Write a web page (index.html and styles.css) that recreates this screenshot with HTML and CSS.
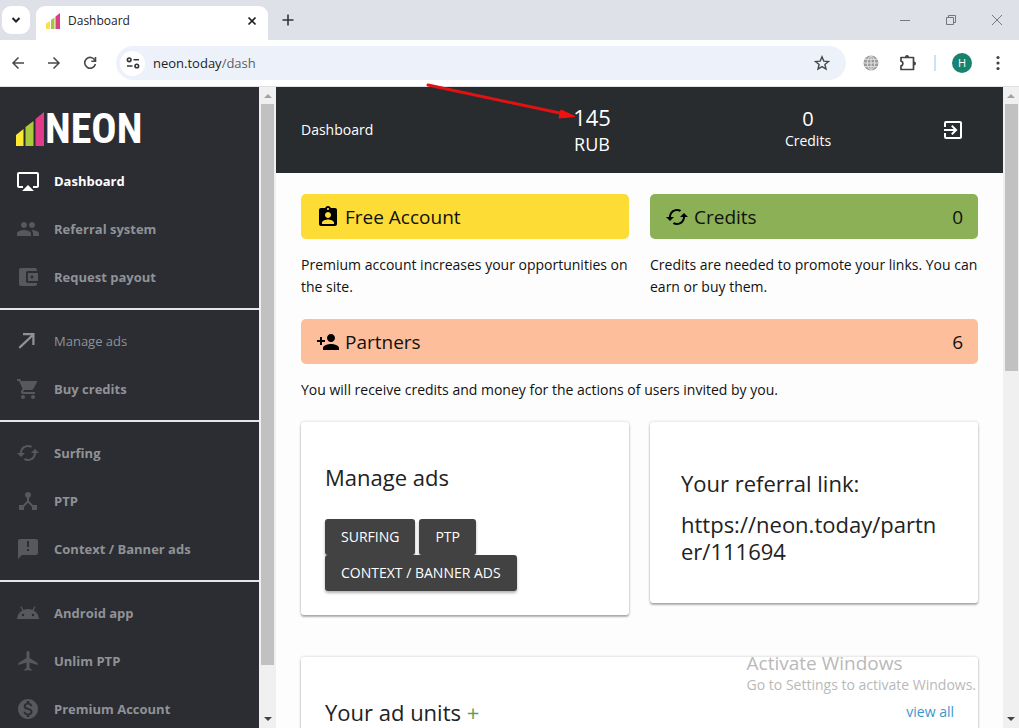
FILE: index.html
```html
<!DOCTYPE html>
<html lang="en">
<head>
<meta charset="utf-8">
<title>Dashboard</title>
<link rel="stylesheet" href="styles.css">
</head>
<body>
<div class="browser">
  <div class="tabstrip">
    <button class="tab-search" aria-label="Search tabs"><svg width="12" height="12" viewBox="0 0 12 12"><path d="M2.500 4 6 7.500 9.500 4" fill="none" stroke="#1f2023" stroke-width="2"/></svg></button>
    <div class="tab">
      <svg width="14" height="16" viewBox="0 0 14 16"><path d="M0 10.500 4 8v8H0z" fill="#fbe04a"/><path d="M5 7 8.500 4.500V16H5z" fill="#a5c63b"/><path d="M9.500 3.500 14 0v16H9.500z" fill="#dd3f87"/></svg>
      <span class="tab-title">Dashboard</span>
      <button class="icon-btn" aria-label="Close tab"><svg width="10" height="10" viewBox="0 0 10 10"><path d="m1.500 1.500 7 7m0-7-7 7" stroke="#1f2023" stroke-width="1.700"/></svg></button>
    </div>
    <button class="icon-btn new-tab" aria-label="New tab"><svg width="12" height="12" viewBox="0 0 12 12"><path d="M6 .500v11M.500 6h11" stroke="#333639" stroke-width="1.600"/></svg></button>
    <div class="window-controls">
      <button class="icon-btn" aria-label="Minimize"><svg width="12" height="12" viewBox="0 0 12 12"><path d="M1 6.500h10" stroke="#75787c"/></svg></button>
      <button class="icon-btn" aria-label="Restore"><svg width="12" height="12" viewBox="0 0 12 12"><path d="M1.500 3.500h7v7h-7zM3.500 3.500v-2h7v7h-2" fill="none" stroke="#75787c"/></svg></button>
      <button class="icon-btn" aria-label="Close window"><svg width="12" height="12" viewBox="0 0 12 12"><path d="m1 1 10 10m0-10L1 11" stroke="#75787c"/></svg></button>
    </div>
  </div>
  <div class="toolbar">
    <button class="icon-btn nav-btn" aria-label="Back"><svg width="14" height="14" viewBox="0 0 14 14"><path d="M13 7H2m5.500-5.500L2 7l5.500 5.500" fill="none" stroke="#45484c" stroke-width="1.500"/></svg></button>
    <button class="icon-btn nav-btn" aria-label="Forward"><svg width="14" height="14" viewBox="0 0 14 14"><path d="M1 7h11M6.500 1.500 12 7l-5.500 5.500" fill="none" stroke="#45484c" stroke-width="1.500"/></svg></button>
    <button class="icon-btn nav-btn" aria-label="Reload"><svg width="14" height="14" viewBox="0 0 14 14"><path d="M12 4.500A5.400 5.400 0 1 0 12.400 8M12.500 1v4.200H8.300" fill="none" stroke="#45484c" stroke-width="1.600"/></svg></button>
    <div class="omnibox">
      <button class="site-info" aria-label="Site information"><svg width="14" height="14" viewBox="0 0 14 14" fill="none" stroke="#333639" stroke-width="1.600"><circle cx="3.200" cy="3.800" r="1.800"/><path d="M7.500 3.800H13M1 10h5.500"/><circle cx="10.800" cy="10" r="1.800"/></svg></button>
      <span class="url">neon.today<span class="url-path">/dash</span></span>
      <button class="icon-btn" aria-label="Bookmark"><svg width="16" height="16" viewBox="0 0 16 16"><path d="m8 1.800 1.800 4.300 4.700.400-3.600 3 1.100 4.500L8 11.600 4 14l1.100-4.500-3.600-3 4.700-.400z" fill="none" stroke="#45484c" stroke-width="1.400"/></svg></button>
    </div>
    <div class="toolbar-end">
      <button class="icon-btn" aria-label="Globe"><svg width="16" height="16" viewBox="0 0 16 16"><circle cx="8" cy="8" r="7.500" fill="#9a9a9a"/><path d="M0 8h16M1 4.300h14M1 11.700h14M8 0v16M8 .5C3 4 3 12 8 15.500M8 .5c5 3.500 5 11.500 0 15" fill="none" stroke="#e4e4e4"/></svg></button>
      <button class="icon-btn" aria-label="Extensions"><svg width="18" height="18" viewBox="0 0 18 18"><path d="M2 3.500h12.500V15.500H2v-3.600a2.400 2.400 0 0 0 0-4.700z" fill="none" stroke="#404347" stroke-width="1.700" stroke-linejoin="round"/><path d="M6 3a2 2 0 0 1 4 0zM15 7.500a2 2 0 0 1 0 4z" fill="#404347"/></svg></button>
      <span class="divider"></span>
      <button class="avatar">H</button>
      <button class="icon-btn" aria-label="Menu"><svg width="4" height="16" viewBox="0 0 4 16" fill="#404347"><circle cx="2" cy="2.500" r="1.600"/><circle cx="2" cy="8" r="1.600"/><circle cx="2" cy="13.500" r="1.600"/></svg></button>
    </div>
  </div>

  <div class="page">
    <aside class="sidebar">
      <div class="logo">
        <svg width="28" height="36" viewBox="0 0 28 36"><path d="M0 25 7.500 19v17H0z" fill="#fde92f"/><path d="M9.500 17 17.500 11v25h-8z" fill="#a9cb3c"/><path d="M19.500 9 28 2v34h-8.500z" fill="#e23b8a"/></svg>
        <span>NEON</span>
      </div>
      <nav>
        <div class="nav-group">
          <a class="active" href="#"><svg viewBox="0 0 24 24"><path d="M6 22h12l-6-6zM21 3H3c-1.100 0-2 .900-2 2v12c0 1.100.900 2 2 2h4v-2H3V5h18v12h-4v2h4c1.100 0 2-.900 2-2V5c0-1.100-.900-2-2-2z"/></svg>Dashboard</a>
          <a href="#"><svg viewBox="0 0 24 24"><path d="M16 11c1.660 0 2.990-1.340 2.990-3S17.660 5 16 5s-3 1.340-3 3 1.340 3 3 3zm-8 0c1.660 0 2.990-1.340 2.990-3S9.660 5 8 5 5 6.340 5 8s1.340 3 3 3zm0 2c-2.330 0-7 1.170-7 3.500V19h14v-2.500c0-2.330-4.670-3.500-7-3.500zm8 0c-.290 0-.620.020-.970.050 1.160.840 1.970 1.970 1.970 3.450V19h6v-2.500c0-2.330-4.670-3.500-7-3.500z"/></svg>Referral system</a>
          <a href="#"><svg viewBox="0 0 24 24"><path d="M21 18v1c0 1.100-.900 2-2 2H5c-1.110 0-2-.900-2-2V5c0-1.100.890-2 2-2h14c1.100 0 2 .900 2 2v1h-9c-1.110 0-2 .900-2 2v8c0 1.100.890 2 2 2h9zm-9-2h10V8H12v8zm4-2.500c-.830 0-1.500-.670-1.500-1.500s.670-1.500 1.500-1.500 1.500.670 1.500 1.500-.670 1.500-1.500 1.500z"/></svg>Request payout</a>
        </div>
        <div class="nav-group">
          <a class="plain" href="#"><svg viewBox="0 0 24 24"><path d="M7 4v2.300h8L2.500 18 4 19.700 16.300 8v8h2.200V4z"/></svg>Manage ads</a>
          <a href="#"><svg viewBox="0 0 24 24"><path d="M7 18c-1.100 0-1.990.900-1.990 2S5.900 22 7 22s2-.900 2-2-.900-2-2-2zM1 2v2h2l3.600 7.590-1.350 2.450c-.160.280-.250.610-.250.960 0 1.100.900 2 2 2h12v-2H7.420c-.140 0-.250-.110-.250-.250l.030-.120.900-1.630h7.450c.750 0 1.410-.410 1.750-1.030l3.580-6.490A1 1 0 0 0 20 4H5.210l-.940-2H1zm16 16c-1.100 0-1.990.900-1.990 2s.890 2 1.990 2 2-.900 2-2-.900-2-2-2z"/></svg>Buy credits</a>
        </div>
        <div class="nav-group">
          <a href="#"><svg viewBox="0 0 24 24"><path d="m19 8-4 4h3c0 3.310-2.690 6-6 6-1.010 0-1.970-.250-2.800-.700l-1.460 1.460A7.930 7.930 0 0 0 12 20c4.420 0 8-3.580 8-8h3l-4-4zM6 12c0-3.310 2.690-6 6-6 1.010 0 1.970.250 2.800.700l1.460-1.460A7.930 7.930 0 0 0 12 4c-4.420 0-8 3.580-8 8H1l4 4 4-4H6z"/></svg>Surfing</a>
          <a href="#"><svg viewBox="0 0 24 24"><path d="m17 16-4-4V8.820C14.160 8.400 15 7.300 15 6c0-1.660-1.340-3-3-3S9 4.340 9 6c0 1.300.840 2.400 2 2.820V12l-4 4H3v5h5v-3.050l4-4.200 4 4.200V21h5v-5h-4z"/></svg>PTP</a>
          <a href="#"><svg viewBox="0 0 24 24"><path d="M20 2H4c-1.100 0-1.990.900-1.990 2L2 22l4-4h14c1.100 0 2-.900 2-2V4c0-1.100-.900-2-2-2zm-7 12h-2v-2h2v2zm0-4h-2V4h2v6z"/></svg>Context / Banner ads</a>
        </div>
        <div class="nav-group">
          <a href="#"><svg viewBox="0 0 24 24"><path d="m17.600 9.480 1.840-3.180c.160-.310.040-.690-.260-.850a.640.640 0 0 0-.830.220l-1.880 3.240a11.460 11.460 0 0 0-8.940 0L5.650 5.670a.640.640 0 0 0-.870-.200c-.280.180-.370.540-.220.830L6.400 9.480A10.780 10.780 0 0 0 1 18h22a10.780 10.780 0 0 0-5.400-8.520zM7 15.250a1.250 1.250 0 1 1 0-2.500 1.250 1.250 0 0 1 0 2.500zm10 0a1.250 1.250 0 1 1 0-2.500 1.250 1.250 0 0 1 0 2.500z"/></svg>Android app</a>
          <a href="#"><svg viewBox="0 0 24 24"><path d="M21.500 16v-2l-8-5V3.500c0-.830-.670-1.500-1.500-1.500s-1.500.670-1.500 1.500V9l-8 5v2l8-2.500V19l-2 1.500V22l3.500-1 3.500 1v-1.500l-2-1.500v-5.500l8 2.500z"/></svg>Unlim PTP</a>
          <a href="#"><svg viewBox="0 0 24 24"><path d="M12 2C6.480 2 2 6.480 2 12s4.480 10 10 10 10-4.480 10-10S17.520 2 12 2zm1.410 16.090V20h-2.670v-1.930c-1.710-.360-3.160-1.460-3.270-3.400h1.960c.100 1.050.820 1.870 2.650 1.870 1.960 0 2.400-.980 2.400-1.590 0-.830-.440-1.610-2.670-2.140-2.480-.600-4.180-1.620-4.180-3.670 0-1.720 1.390-2.840 3.110-3.210V4h2.670v1.950c1.860.450 2.790 1.860 2.850 3.390H14.300c-.050-1.110-.640-1.870-2.220-1.870-1.500 0-2.400.680-2.400 1.640 0 .840.650 1.390 2.670 1.910s4.180 1.390 4.180 3.910c-.010 1.830-1.380 2.830-3.120 3.160z"/></svg>Premium Account</a>
        </div>
      </nav>
    </aside>
    <div class="scrollbar side-scroll"><span class="up"></span><span class="thumb"></span><span class="down"></span></div>

    <main>
      <header class="topbar">
        <span class="crumb">Dashboard</span>
        <div class="money"><span>145</span><span>RUB</span></div>
        <div class="credits"><span class="num">0</span><span>Credits</span></div>
        <button class="icon-btn" aria-label="Log out"><svg width="24" height="24" viewBox="0 0 24 24" fill="#fff"><path d="M10.090 15.590 11.500 17l5-5-5-5-1.410 1.410L12.670 11H3v2h9.670l-2.580 2.590zM19 3H5a2 2 0 0 0-2 2v4h2V5h14v14H5v-4H3v4a2 2 0 0 0 2 2h14c1.100 0 2-.900 2-2V5c0-1.100-.900-2-2-2z"/></svg></button>
      </header>
      <div class="content">
        <section>
          <div class="banner yellow"><svg viewBox="0 0 24 24"><path d="M19 3h-4.180C14.400 1.840 13.300 1 12 1s-2.400.840-2.820 2H5c-1.100 0-2 .900-2 2v14c0 1.100.900 2 2 2h14c1.100 0 2-.900 2-2V5c0-1.100-.900-2-2-2zm-7 0c.550 0 1 .450 1 1s-.450 1-1 1-1-.450-1-1 .450-1 1-1zm0 4c1.660 0 3 1.340 3 3s-1.340 3-3 3-3-1.340-3-3 1.340-3 3-3zm6 12H6v-1.400c0-2 4-3.100 6-3.100s6 1.100 6 3.100V19z"/></svg><span>Free Account</span></div>
          <p>Premium account increases your opportunities on the site.</p>
        </section>
        <section>
          <div class="banner green"><svg viewBox="0 0 24 24"><path d="m19 8-4 4h3c0 3.310-2.690 6-6 6-1.010 0-1.970-.250-2.800-.700l-1.460 1.460A7.930 7.930 0 0 0 12 20c4.420 0 8-3.580 8-8h3l-4-4zM6 12c0-3.310 2.690-6 6-6 1.010 0 1.970.250 2.800.700l1.460-1.460A7.930 7.930 0 0 0 12 4c-4.420 0-8 3.580-8 8H1l4 4 4-4H6z"/></svg><span>Credits</span><span class="count">0</span></div>
          <p>Credits are needed to promote your links. You can earn or buy them.</p>
        </section>
        <section class="wide">
          <div class="banner peach"><svg viewBox="0 0 24 24"><path d="M15 12c2.210 0 4-1.790 4-4s-1.790-4-4-4-4 1.790-4 4 1.790 4 4 4zm-9-2V7H4v3H1v2h3v3h2v-3h3v-2H6zm9 4c-2.670 0-8 1.340-8 4v2h16v-2c0-2.660-5.330-4-8-4z"/></svg><span>Partners</span><span class="count">6</span></div>
          <p>You will receive credits and money for the actions of users invited by you.</p>
        </section>
        <section class="card manage">
          <h2>Manage ads</h2>
          <div class="buttons"><button>SURFING</button><button>PTP</button><button>CONTEXT / BANNER ADS</button></div>
        </section>
        <section class="card referral">
          <h2>Your referral link:</h2>
          <div class="ref-link">https://neon.today/partner/111694</div>
        </section>
        <section class="card wide units">
          <h2>Your ad units <a class="add" href="#">+</a></h2>
          <a class="view-all" href="#">view all</a>
        </section>
      </div>
    </main>
    <div class="scrollbar main-scroll"><span class="up"></span><span class="thumb"></span><span class="down"></span></div>
  </div>

  <svg class="pointer" width="152" height="42" viewBox="0 0 152 42"><path d="M2 2 136 30.500" stroke="#e01212" stroke-width="3" stroke-linecap="round"/><path d="m135 27 14 6.500-16 1.500z" fill="#f51010" stroke="#f51010"/></svg>
  <div class="watermark"><div class="wm-title">Activate Windows</div><div>Go to Settings to activate Windows.</div></div>
</div>
</body>
</html>
```
FILE: styles.css
```css
* { box-sizing: border-box; }
body {
  margin: 0;
  font: 14px/22px "Open Sans", "Noto Sans", sans-serif;
  color: #111;
  background: #fff;
}
svg { display: block; flex: none; }
button { font: inherit; border: 0; padding: 0; background: none; cursor: pointer; }
a { text-decoration: none; }
h2, p { margin: 0; font-weight: 400; }
.browser { position: relative; display: flex; flex-direction: column; height: 100vh; overflow: hidden; }
.icon-btn { display: grid; place-items: center; }

.tabstrip { display: flex; align-items: center; height: 40px; flex: none; background: #dee1e7; padding-left: 2px; }
.tab-search { display: grid; place-items: center; width: 28px; height: 28px; border-radius: 9px; background: #fff; }
.tab {
  display: flex; align-items: center; gap: 8px;
  align-self: flex-end; width: 232px; height: 34px;
  margin-left: 6px; padding: 0 11px 4px 10px;
  background: #fff; border-radius: 9px 9px 0 0;
}
.tab-title { flex: 1; font-size: 12px; color: #222; }
.new-tab { margin-left: 14px; }
.window-controls { display: flex; gap: 34px; margin-left: auto; padding-right: 16px; }

.toolbar { display: flex; align-items: center; height: 47px; flex: none; padding-left: 11px; border-bottom: 1px solid #dfe2e5; }
.nav-btn { width: 14px; margin-right: 22px; }
.omnibox {
  flex: 1; display: flex; align-items: center; gap: 8px;
  height: 34px; margin-left: -3px; padding: 0 16px 0 4px;
  background: #edf2fa; border-radius: 17px;
}
.site-info { display: grid; place-items: center; width: 25px; height: 25px; border-radius: 50%; background: #fff; }
.url { flex: 1; font-size: 13px; color: #222; }
.url-path { color: #5b5e62; }
.toolbar-end { display: flex; align-items: center; padding: 0 19px 0 17px; gap: 20px; }
.divider { width: 2px; height: 16px; background: #cfe0fa; margin: 0 -4px 0 -3px; }
.avatar { width: 20px; height: 20px; margin-right: 4px; border-radius: 50%; background: #17836f; color: #fff; font-size: 11px; line-height: 20px; }

.page { flex: 1; display: flex; min-height: 0; }
.sidebar { width: 259px; flex: none; overflow: hidden; background: #2b2d32; }
.logo {
  display: flex; align-items: flex-end; gap: 1px;
  height: 70px; padding: 0 16px 11px;
  color: #fff; font: 700 42px/34px "Roboto Condensed", "Liberation Sans Narrow", Roboto, sans-serif;
}
.nav-group + .nav-group { margin-top: 7px; padding-top: 7px; border-top: 2px solid #e6e6ea; }
.nav-group a { display: flex; align-items: center; gap: 14px; height: 48px; padding-left: 16px; color: #909296; font-size: 13px; font-weight: 700; }
.nav-group svg { width: 24px; height: 24px; fill: #56585d; }
.nav-group .active { color: #fff; }
.nav-group .active svg { fill: #fff; }
.nav-group .plain { font-weight: 400; }
.nav-group .plain svg { fill: #909296; }

.scrollbar { display: flex; flex-direction: column; align-items: center; flex: none; width: 17px; background: #f0f0f0; }
.up, .down { border: 4px solid transparent; width: 8px; flex: none; }
.up { border-top: 0; border-bottom-color: #a3a3a3; margin: 7px 0 6px; }
.down { border-bottom: 0; border-top-color: #444; margin: auto 0 7px; }
.thumb { width: 13px; background: #c1c1c1; }
.side-scroll .thumb { flex: 0 0 87.5%; }
.main-scroll { width: 16px; }
.main-scroll .thumb { flex: 0 0 41.6%; }

main { flex: 1; min-width: 0; overflow: hidden; background: #fdfdfd; }
.topbar {
  display: grid; grid-template-columns: 183fr 216fr 216fr 74fr; align-items: center;
  height: 86px; padding: 0 13px 0 25px;
  background: #292c2f; color: #fff;
}
.money, .credits { display: flex; flex-direction: column; align-items: center; }
.money { font-size: 22px; line-height: 28px; }
.money span + span { font-size: 18px; line-height: 26px; }
.credits .num { font-size: 20px; }

.content { display: grid; grid-template-columns: 1fr 1fr; column-gap: 21px; align-items: start; padding: 21px 25px; }
.wide { grid-column: 1 / -1; }
.banner { display: flex; align-items: center; gap: 5px; height: 45px; padding: 0 15px; border-radius: 5px; font-size: 19px; }
.banner svg { width: 24px; height: 24px; }
.count { margin-left: auto; }
.yellow { background: #fcdc35; }
.green { background: #8bb056; }
.peach { background: #fcbe9b; }
.content p { padding: 15px 0 21px; }
.card { background: #fff; border-radius: 3px; box-shadow: 0 2px 2px rgba(0,0,0,.28), 0 0 3px rgba(0,0,0,.2); }
.card h2 { font-size: 22px; line-height: 32px; color: #222; }
.manage { padding: 39px 24px 24px; }
.buttons { display: flex; flex-wrap: wrap; column-gap: 4px; padding-top: 26px; }
.buttons button { height: 36px; padding: 0 16px; border-radius: 3px; background: #424242; color: #fff; font-size: 14px; box-shadow: 0 2px 3px rgba(0,0,0,.3); }
.referral { padding: 45px 31px 38px; }
.ref-link { padding-top: 12px; font-size: 22px; line-height: 27px; color: #222; word-break: break-all; }
.units { display: flex; justify-content: space-between; align-items: center; margin-top: 42px; padding: 39px 24px; }
.units .add { color: #5ba05f; }
.view-all { color: #3a97cb; }

.pointer { position: absolute; left: 426px; top: 83px; }
.watermark { position: absolute; right: 43px; bottom: 32px; color: #b9b9b9; font-size: 14px; }
.wm-title { font-size: 19px; }
```
